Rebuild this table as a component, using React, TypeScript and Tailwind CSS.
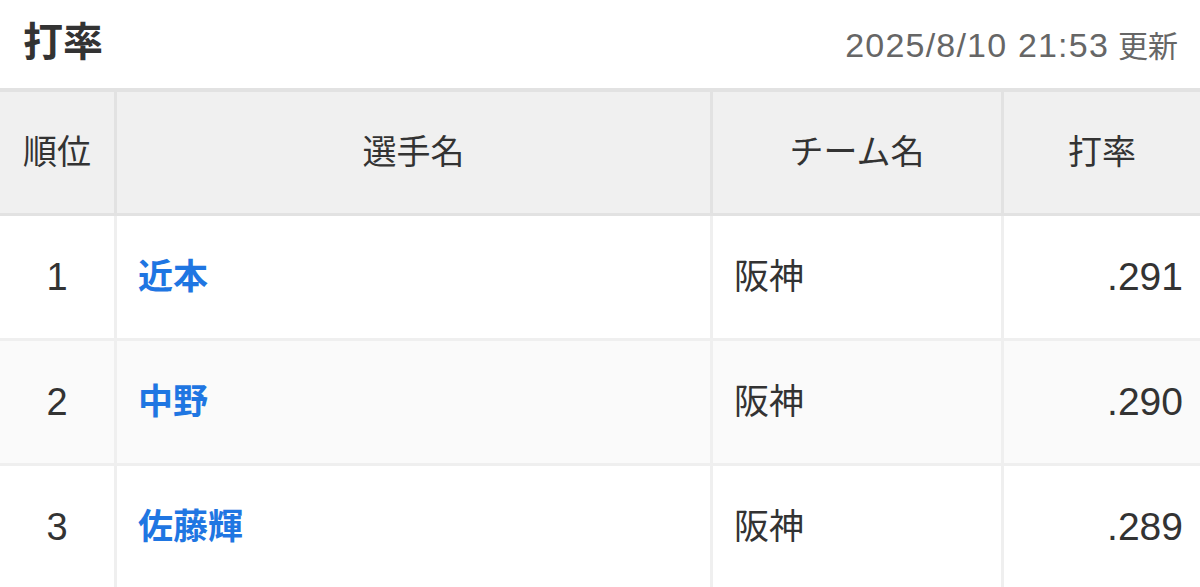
import React from 'react';

interface Row {
    rank: number;
    name: string;
    team: string;
    avg: string;
}

const ROWS: Row[] = [
    { rank: 1, name: '近本', team: '阪神', avg: '.291' },
    { rank: 2, name: '中野', team: '阪神', avg: '.290' },
    { rank: 3, name: '佐藤輝', team: '阪神', avg: '.289' },
];

const font = { fontFamily: '"Liberation Sans", "Noto Sans CJK JP", sans-serif' };

const App: React.FC = () => {
    return (
        <div className="w-[1200px] h-[587px] overflow-hidden bg-white text-[#333]" style={font}>
            {/* Title bar */}
            <div className="h-[88px] flex items-center justify-between pl-[23px] pr-[22px]">
                <h1 className="text-[40px] font-bold leading-none -mt-[4px]">打率</h1>
                <span className="text-[#666] leading-none mt-[2px] flex items-baseline">
                    <span className="text-[34px] tracking-[1.2px]">2025/8/10 21:53</span>
                    <span className="text-[30px] ml-[9px]">更新</span>
                </span>
            </div>

            {/* Header */}
            <div className="flex h-[128px] bg-[#f0f0f0] border-y-[3px] border-t-[4px] border-[#e2e2e2] text-[34px]">
                <div className="w-[117px] border-r-[3px] border-[#e2e2e2] flex items-center justify-center">順位</div>
                <div className="w-[596px] border-r-[3px] border-[#e2e2e2] flex items-center justify-center">選手名</div>
                <div className="w-[291px] border-r-[3px] border-[#e2e2e2] flex items-center justify-center">チーム名</div>
                <div className="flex-1 flex items-center justify-center">打率</div>
            </div>

            {/* Body */}
            {ROWS.map((row, i) => (
                <div
                    key={row.rank}
                    className={`flex h-[125px] border-b-[3px] border-[#efefef] text-[35px] ${i % 2 === 1 ? 'bg-[#fafafa]' : 'bg-white'}`}
                >
                    <div className="w-[117px] border-r-[3px] border-[#efefef] flex items-center justify-center text-[38px]">{row.rank}</div>
                    <div className="w-[596px] border-r-[3px] border-[#efefef] flex items-center pl-[21px] font-bold text-[#1f76e2]">{row.name}</div>
                    <div className="w-[291px] border-r-[3px] border-[#efefef] flex items-center pl-[21px]">{row.team}</div>
                    <div className="flex-1 flex items-center justify-end pr-[17px] text-[39px]">{row.avg}</div>
                </div>
            ))}
        </div>
    );
};

export default App;
